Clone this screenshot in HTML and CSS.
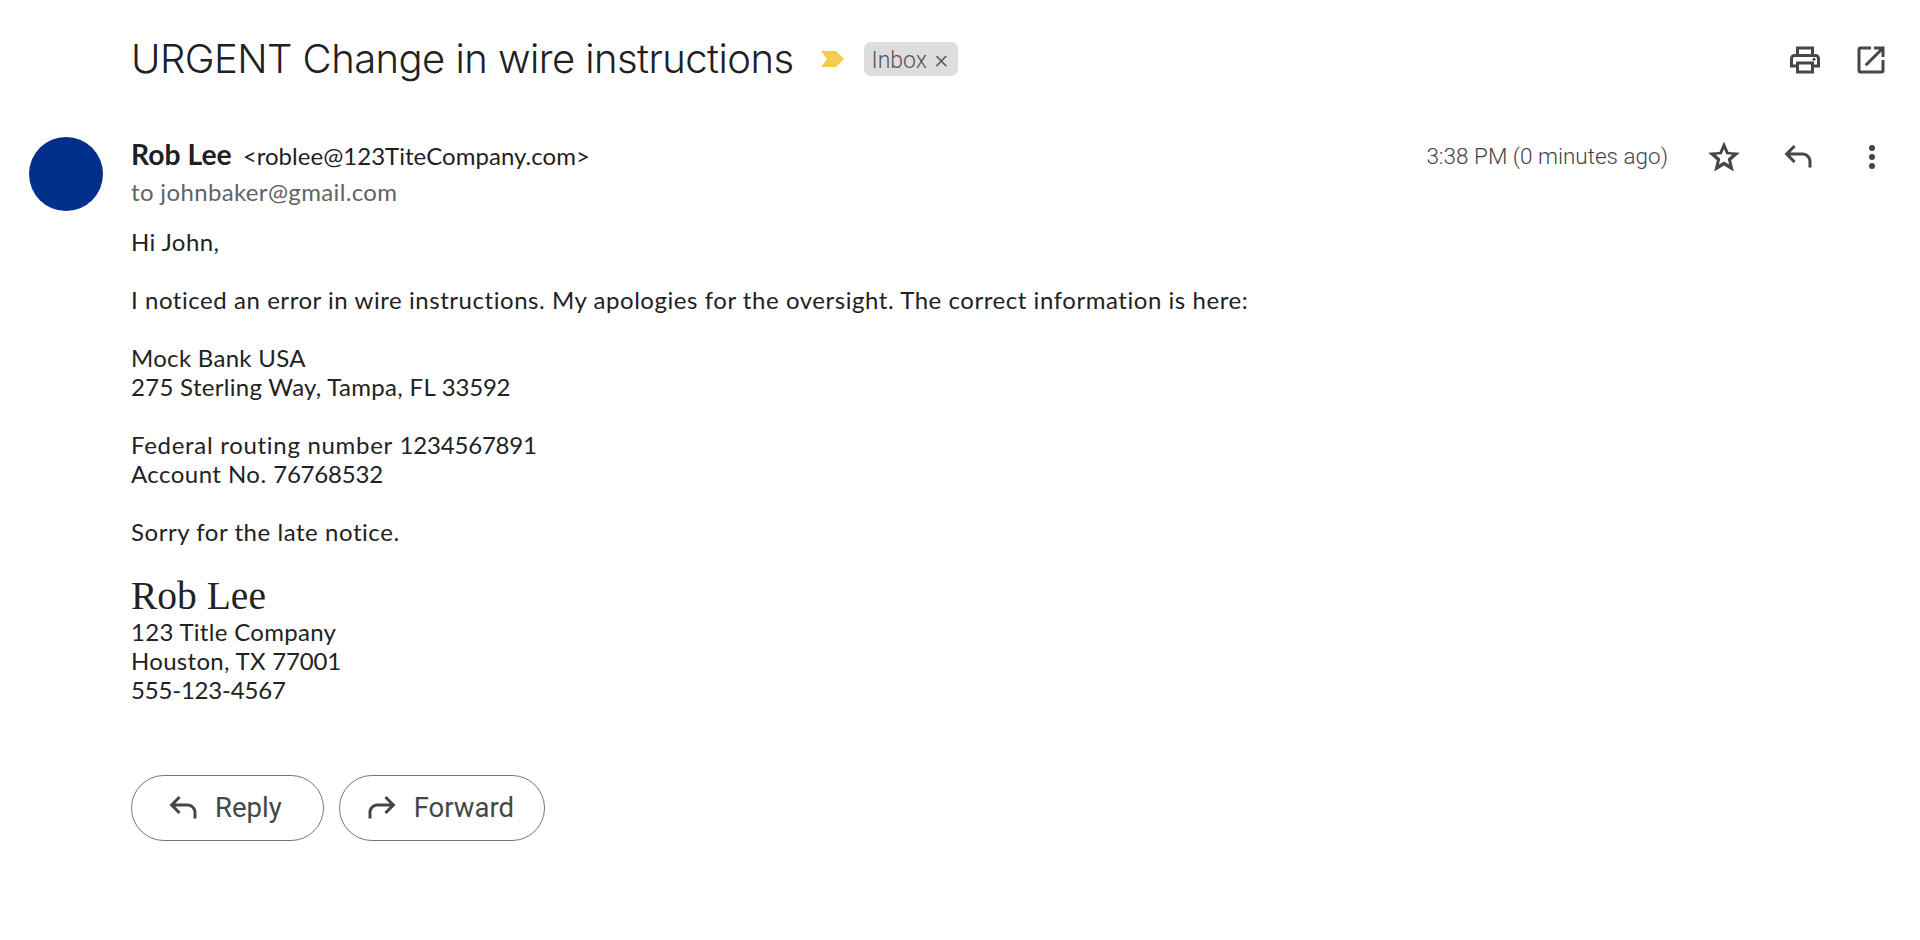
FILE: index.html
```html
<!DOCTYPE html>
<html lang="en">
<head>
<meta charset="utf-8">
<title>URGENT Change in wire instructions</title>
<link rel="stylesheet" href="styles.css">
</head>
<body>
<div class="page">
  <header class="subject-row">
    <h1 class="subject">URGENT Change in wire instructions</h1>
    <svg class="marker" viewBox="0 0 24 18"><path d="M0 1h15l8 8-8 8H0l6-8z"/></svg>
    <span class="label">Inbox <span class="label-x">×</span></span>
    <div class="top-icons">
      <svg class="icon-lg" viewBox="0 0 24 24"><path d="M19 8h-1V3H6v5H5c-1.66 0-3 1.34-3 3v6h4v4h12v-4h4v-6c0-1.66-1.34-3-3-3zM8 5h8v3H8V5zm8 14H8v-4h8v4zm2-4v-2H6v2H4v-4c0-.55.45-1 1-1h14c.55 0 1 .45 1 1v4h-2z"/><circle cx="18" cy="11.5" r="1"/></svg>
      <svg class="icon-lg" viewBox="0 0 24 24"><path d="M19 19H5V5h7V3H5a2 2 0 0 0-2 2v14a2 2 0 0 0 2 2h14a2 2 0 0 0 2-2v-7h-2v7zM14 3v2h3.59l-9.83 9.83 1.41 1.41L19 6.41V10h2V3h-7z"/></svg>
    </div>
  </header>
  <div class="message">
    <div class="avatar"></div>
    <div class="content">
      <div class="sender-row">
        <div class="sender">
          <span class="sender-name">Rob Lee</span>
          <span class="sender-mail">&lt;roblee@123TiteCompany.com&gt;</span>
        </div>
        <span class="time">3:38 PM (0 minutes ago)</span>
        <div class="actions">
          <svg class="icon" viewBox="0 0 24 24"><path d="M22.5 9.24l-7.5-.65L12 1.6 9 8.6l-7.5.64 5.7 4.94L5.5 21.6 12 17.7l6.5 3.9-1.7-7.42 5.7-4.94zM12 15l-3.4 2.05.9-3.87-3-2.6 3.96-.34L12 6.6l1.54 3.64 3.96.34-3 2.6.9 3.87L12 15z"/></svg>
          <svg class="icon" viewBox="0 0 24 24"><path d="M21 19h-2v-4c0-2.2-1.8-4-4-4H6.83l3.58 3.59L9 16l-6-6 6-6 1.41 1.41L6.83 9H15c3.31 0 6 2.69 6 6v4z"/></svg>
          <svg class="icon" viewBox="0 0 24 24"><circle cx="12" cy="6" r="2"/><circle cx="12" cy="12" r="2"/><circle cx="12" cy="18" r="2"/></svg>
        </div>
      </div>
      <div class="recipient">to johnbaker@gmail.com</div>
      <div class="body">
        <p>Hi John,</p>
        <p class="wide">I noticed an error in wire instructions. My apologies for the oversight. The correct information is here:</p>
        <p class="snug">Mock Bank USA<br>275 Sterling Way, Tampa, FL <span class="num">33592</span></p>
        <p><span class="wider">Federal routing number</span> <span class="num">1234567891</span><br>Account No. <span class="num">76768532</span></p>
        <p class="wide">Sorry for the late notice.</p>
        <div class="signature">
          <div class="sig-name">Rob Lee</div>
          123 Title Company<br>Houston, TX <span class="num">77001</span><br><span class="num">555-123-4567</span>
        </div>
      </div>
      <div class="buttons">
        <button class="btn btn-reply">
          <svg class="icon" viewBox="0 0 24 24"><path d="M21 19h-2v-4c0-2.2-1.8-4-4-4H6.83l3.58 3.59L9 16l-6-6 6-6 1.41 1.41L6.83 9H15c3.31 0 6 2.69 6 6v4z"/></svg>
          Reply
        </button>
        <button class="btn btn-forward">
          <svg class="icon flip" viewBox="0 0 24 24"><path d="M21 19h-2v-4c0-2.2-1.8-4-4-4H6.83l3.58 3.59L9 16l-6-6 6-6 1.41 1.41L6.83 9H15c3.31 0 6 2.69 6 6v4z"/></svg>
          Forward
        </button>
      </div>
    </div>
  </div>
</div>
</body>
</html>
```
FILE: styles.css
```css
* { box-sizing: border-box; }
html, body { margin: 0; background: #fff; }
.page { width: 1920px; height: 940px; overflow: hidden; }
.subject-row { display: flex; align-items: center; height: 60px; margin-top: 29px; padding-left: 131px; padding-right: 31px; }
.subject { margin: 0; font: 300 40px/60px Inter, Roboto, sans-serif; color: #202124; letter-spacing: -0.55px; white-space: nowrap; }
.marker { width: 24px; height: 18px; fill: #f7cb4d; margin-left: 27px; }
.label { margin-left: 19px; height: 34px; padding: 0 10px 0 8px; background: #dddddd; border-radius: 7px; font: 300 23px/34px Roboto, sans-serif; color: #555; white-space: nowrap; }
.label-x { font-size: 26px; margin-left: 2px; }
.top-icons { margin-left: auto; display: flex; gap: 30px; padding-top: 2px; }
.icon-lg { width: 36px; height: 36px; fill: #444746; display: block; }
.icon { width: 36px; height: 36px; fill: #444746; display: block; flex: none; }
.message { display: flex; margin-top: 48px; padding-left: 29px; }
.avatar { width: 74px; height: 74px; border-radius: 50%; background: #00308a; flex: none; }
.content { margin-left: 28px; flex: 1; padding-right: 30px; }
.sender-row { display: flex; align-items: center; height: 38px; }
.sender { flex: 1; font-family: Lato, sans-serif; color: #1f1f1f; line-height: 36px; }
.sender-name { font-size: 28.3px; font-weight: 700; }
.sender-mail { font-size: 24px; margin-left: 7px; letter-spacing: 0.03px; }
.time { font: 300 22.5px/38px Roboto, sans-serif; color: #444; }
.actions { display: flex; gap: 38px; margin-left: 38px; position: relative; top: 1px; }
.recipient { font: 400 24px/28px Lato, sans-serif; letter-spacing: 0.35px; color: #5f6368; margin-top: 3px; }
.body { margin-top: 21px; font: 400 24px/29px Lato, sans-serif; letter-spacing: 0.45px; color: #222; }
.body p { margin: 0 0 29px; }
.body .wide { letter-spacing: 0.55px; }
.body .snug { letter-spacing: 0.3px; }
.wider { letter-spacing: 0.7px; }
.num { letter-spacing: -0.2px; }
.signature { letter-spacing: 0.3px; }
.sig-name { font: 400 39.5px/42px "Liberation Serif", serif; margin-top: 3px; letter-spacing: 0; }
.buttons { display: flex; gap: 15px; margin-top: 71px; }
.btn { display: flex; align-items: center; gap: 14px; height: 66px; background: #fff; border: 1.5px solid #747775; border-radius: 33px; font: 400 27.5px/1 Roboto, sans-serif; color: #444746; }
.btn-reply { padding: 0 41px 0 33px; }
.btn-forward { padding: 0 30px 0 24px; }
.flip { transform: scaleX(-1); }
```
